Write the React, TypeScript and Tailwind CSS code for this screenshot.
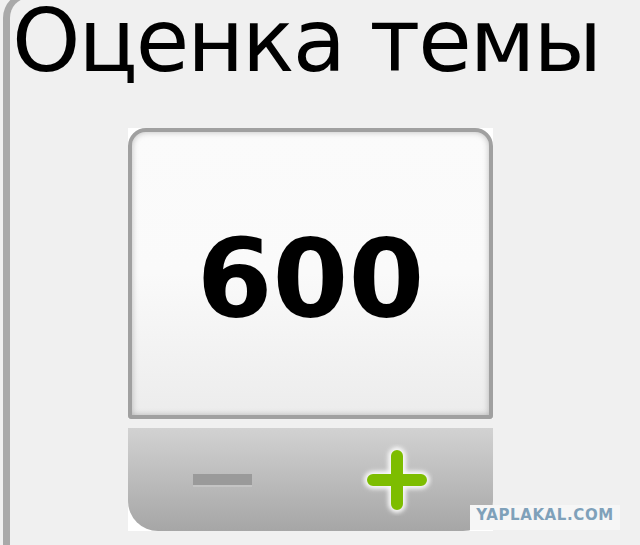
import { FC } from "react";

// green plus with a soft white halo
const PlusIcon: FC = () => (
    <svg width="72" height="72" viewBox="0 0 72 72" className="shrink-0">
        <defs>
            <filter id="halo" x="-30%" y="-30%" width="160%" height="160%">
                <feGaussianBlur stdDeviation="2.2" />
            </filter>
        </defs>
        <path d="M36 12 V60 M12 36 H60" stroke="#ffffff" strokeWidth="18" strokeLinecap="round" filter="url(#halo)" opacity="0.9" />
        <path d="M36 12 V60 M12 36 H60" stroke="#7dbd00" strokeWidth="12" strokeLinecap="round" />
    </svg>
);

const RatingWidget: FC = () => {
    return (
        <div className="w-[365px] flex flex-col gap-[9px]">
            <div className="h-[291px] bg-white">
                <div className="h-full border-[4px] border-[#a0a0a0] rounded-t-[18px] rounded-b-[3px] bg-gradient-to-b from-[#fbfbfb] via-[#fafafa] to-[#ececec] shadow-[inset_0_0_6px_rgba(0,0,0,0.25)] flex items-center justify-center">
                    <span className="font-['DejaVu_Sans',sans-serif] font-bold text-[109px] leading-none text-black mt-[9px]">
                        600
                    </span>
                </div>
            </div>
            <div className="h-[103px] bg-white">
                <div className="h-full rounded-b-[30px] bg-gradient-to-b from-[#d2d2d2] to-[#a6a6a6] flex items-center pl-[65px] gap-[109px]">
                    <div className="w-[59px] h-[11px] bg-[#9a9a9a] shadow-[0_2px_0_#c4c4c4]" />
                    <PlusIcon />
                </div>
            </div>
        </div>
    );
};

export default function App() {
    return (
        <div className="w-[640px] h-[545px] bg-[#f0f0f0] overflow-hidden relative">
            <div className="mt-[-8px] ml-[3px] h-[560px] border-l-[7px] border-t-[6px] border-[#a9a9a9] rounded-tl-[26px]">
                <h1 className="font-['DejaVu_Sans',sans-serif] font-normal text-[87px] leading-[78px] text-black pl-[2px] mt-[4px] tracking-[-2px] whitespace-nowrap">
                    Оценка темы
                </h1>
                <div className="ml-[118px] mt-[48px]">
                    <RatingWidget />
                </div>
            </div>
            <div className="absolute left-[470px] top-[505px] w-[150px] h-[25px] bg-[#f6f6f6] flex items-center justify-center pb-[5px]">
                <span className="font-['DejaVu_Sans',sans-serif] font-bold text-[15px] leading-none text-[#7fa1ba] tracking-[0.6px]">
                    YAPLAKAL.COM
                </span>
            </div>
        </div>
    );
}
